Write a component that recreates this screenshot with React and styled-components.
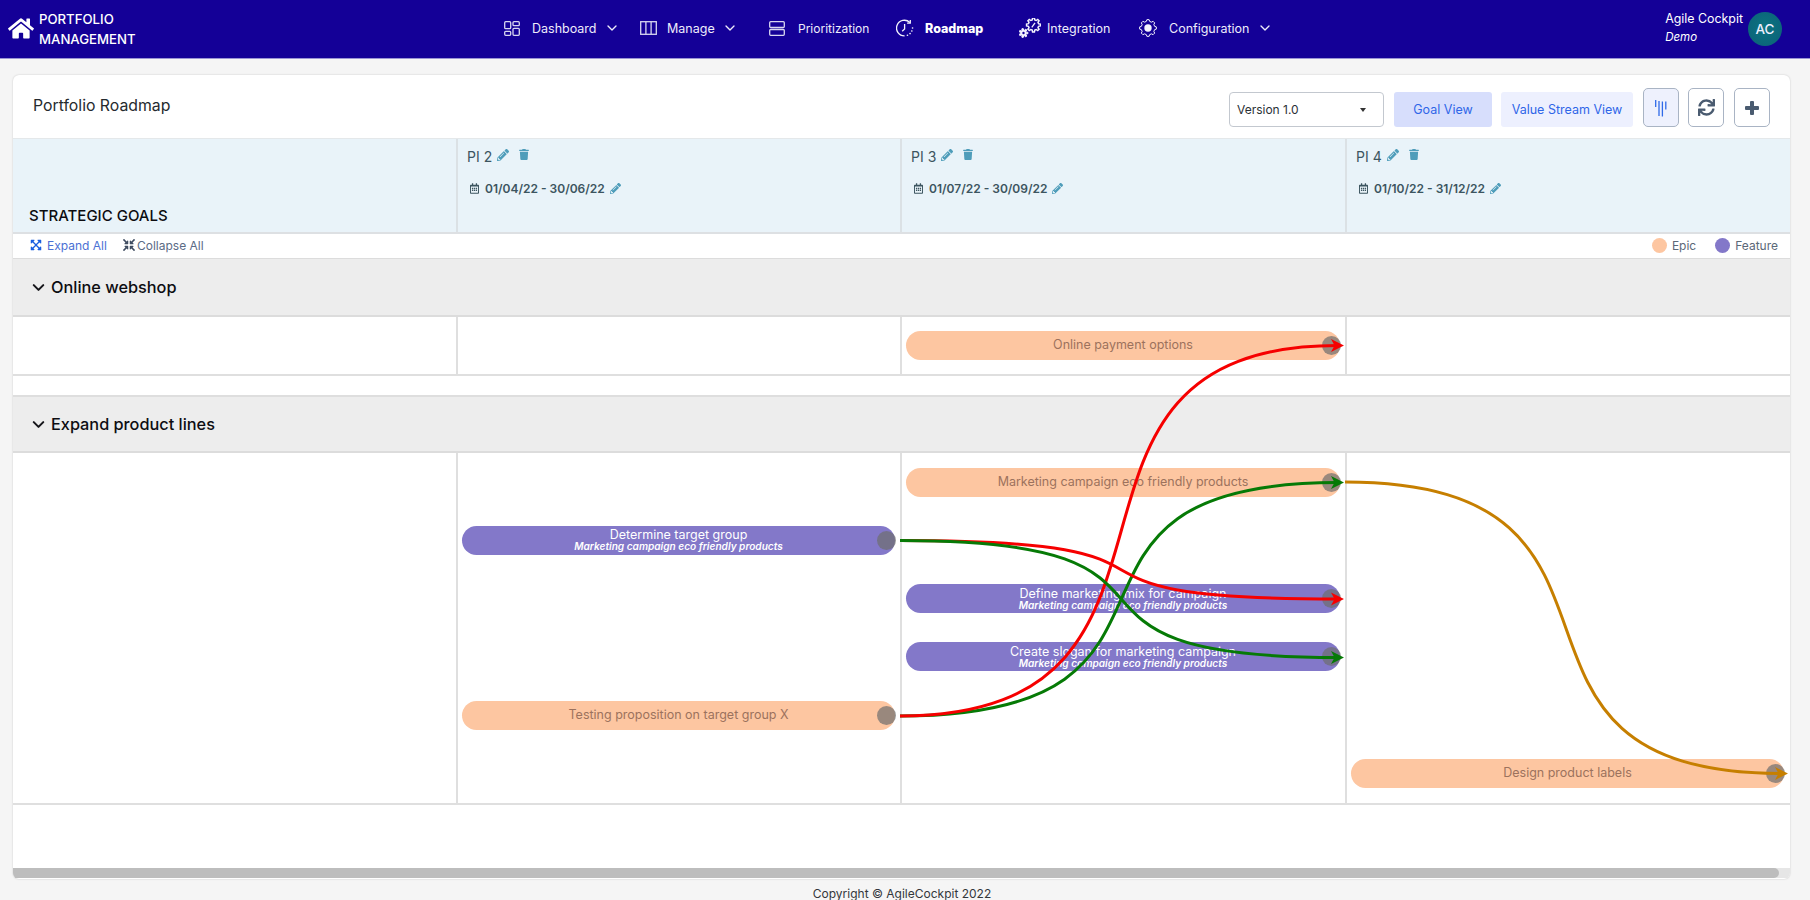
import React from "react";
import styled, { createGlobalStyle } from "styled-components";
import { ChevronDown } from "lucide-react";
import {
  FaHome, FaPencilAlt, FaTrash, FaRegCalendarAlt, FaSync,
  FaExpandArrowsAlt, FaCompressArrowsAlt,
} from "react-icons/fa";

const FONT = `Inter, "Noto Sans", "Liberation Sans", sans-serif`;

const Global = createGlobalStyle`
  html, body { margin: 0; padding: 0; height: 100%; overflow: hidden; }
  body { font-family: ${FONT}; background: #f5f5f5; }
  * { box-sizing: border-box; }
`;

const Page = styled.div`
  position: relative;
  width: 1810px;
  height: 900px;
  overflow: hidden;
  background: #f5f5f5;
  display: flex;
  flex-direction: column;
`;

const TopBar = styled.header`
  height: 59px;
  flex: none;
  background: #140097;
  border-bottom: 1px solid #9a94d4;
  display: flex;
  align-items: center;
  color: #f4f3fd;
`;

const Brand = styled.div`
  width: 504px;
  flex: none;
  padding-left: 8px;
  display: flex;
  align-items: center;
  gap: 5px;
  font-size: 13.2px;
  font-weight: 500;
  line-height: 20px;
  color: #fff;
  svg { width: 26px; height: 23px; flex: none; margin-top: -2px; }
`;

const Nav = styled.nav`
  display: flex;
  align-items: center;
  flex: none;
  margin-top: -2px;
`;

const NavItem = styled.div`
  width: ${(p) => p.$w}px;
  flex: none;
  display: flex;
  align-items: center;
  font-size: ${(p) => p.$size || 12.5}px;
  font-weight: ${(p) => (p.$active ? 800 : 400)};
  color: ${(p) => (p.$active ? "#fff" : "#eeecfb")};
`;

const NavIcon = styled.span`
  width: ${(p) => p.$w}px;
  flex: none;
  display: flex;
  align-items: center;
`;

const NavChevron = styled(ChevronDown)`
  width: 16px;
  height: 16px;
  margin-left: ${(p) => p.$ml}px;
  color: #eeecfb;
  flex: none;
`;

const User = styled.div`
  margin-left: auto;
  padding-right: 28px;
  display: flex;
  align-items: center;
  gap: 5px;
`;

const UserText = styled.div`
  font-size: 12.4px;
  line-height: 18px;
  color: #fff;
  margin-top: -3px;
`;

const UserRole = styled.div`
  font-size: 11.5px;
  font-style: italic;
  font-weight: 400;
`;

const Avatar = styled.div`
  width: 34px;
  height: 34px;
  border-radius: 50%;
  background: radial-gradient(circle at 50% 45%, #0c7480, #0b5f78);
  color: #eef;
  font-size: 13.5px;
  font-weight: 500;
  display: flex;
  align-items: center;
  justify-content: center;
`;

const Main = styled.main`
  flex: none;
  padding: 16px 20px 0 13px;
`;

const Card = styled.section`
  width: 1777px;
  height: 804px;
  background: #fff;
  border-radius: 6px;
  box-shadow: 0 0 2px rgba(0, 0, 0, 0.2);
  overflow: hidden;
  display: flex;
  flex-direction: column;
`;

const Toolbar = styled.div`
  height: 64px;
  flex: none;
  border-bottom: 1px solid #e4e8ea;
  display: flex;
  align-items: flex-start;
  padding: 13px 20px 0 20px;
`;

const Title = styled.h1`
  margin: 8px 0 0;
  font-size: 15.8px;
  font-weight: 400;
  color: #252a2e;
  flex: 1;
`;

const VersionSelect = styled.div`
  width: 155px;
  height: 35px;
  margin-top: 4px;
  border: 1px solid #c3c8cf;
  border-radius: 4px;
  display: flex;
  align-items: center;
  justify-content: space-between;
  padding: 0 17px 0 7px;
  font-size: 12px;
  color: #2a3036;
`;

const Caret = styled.span`
  width: 0;
  height: 0;
  border-left: 3px solid transparent;
  border-right: 3px solid transparent;
  border-top: 4px solid #333;
`;

const ViewButton = styled.div`
  width: ${(p) => p.$w}px;
  height: 35px;
  margin: 4px 0 0 ${(p) => p.$ml}px;
  background: ${(p) => (p.$on ? "#d7defc" : "#edf0fe")};
  border-radius: 3px;
  color: #2f66e8;
  font-size: 12.5px;
  display: flex;
  align-items: center;
  justify-content: center;
`;

const IconButton = styled.div`
  width: 36px;
  height: 39px;
  margin-left: ${(p) => p.$ml}px;
  background: ${(p) => (p.$on ? "#eef1fd" : "#fff")};
  border: 1.5px solid #a9b4c4;
  border-radius: 5px;
  color: #4a5b70;
  display: flex;
  align-items: center;
  justify-content: center;
`;

const Periods = styled.div`
  height: 95px;
  flex: none;
  display: grid;
  grid-template-columns: 445px 444px 445px 443px;
  background: #e9f3f9;
  border-bottom: 2px solid #dde0e3;
`;

const GoalsHead = styled.div`
  border-right: 2px solid #dbe1e5;
  padding: 0 0 5px 16px;
  display: flex;
  align-items: flex-end;
  font-size: 15px;
  font-weight: 500;
  line-height: 22px;
  color: #0c0c10;
`;

const Period = styled.div`
  border-right: ${(p) => (p.$last ? "none" : "2px solid #dbe1e5")};
  padding: 7px 0 0 9px;
  color: #3c5560;
`;

const PiLine = styled.div`
  display: flex;
  align-items: center;
  height: 20px;
  font-size: 14px;
  svg { color: #4f9dba; }
`;

const PiPencil = styled(FaPencilAlt)`
  width: 12px;
  height: 12px;
  margin: -3px 0 0 5px;
`;

const PiTrash = styled(FaTrash)`
  width: 10px;
  height: 11px;
  margin: -4px 0 0 10px;
`;

const DateLine = styled.div`
  display: flex;
  align-items: center;
  margin-top: 13px;
  height: 18px;
  font-size: 12px;
  font-weight: 600;
  color: #3c5560;
`;

const CalendarIcon = styled(FaRegCalendarAlt)`
  width: 9px;
  height: 11px;
  margin: 0 6px 0 3px;
`;

const DatePencil = styled(FaPencilAlt)`
  width: 11px;
  height: 11px;
  margin-left: 5px;
  color: #4f9dba;
`;

const ActionsRow = styled.div`
  height: 25px;
  flex: none;
  border-bottom: 1px solid #dcdcdc;
  display: flex;
  align-items: center;
  padding: 0 12px 2px 17px;
  font-size: 12px;
`;

const ActionLink = styled.span`
  display: flex;
  align-items: center;
  width: ${(p) => p.$w}px;
  color: ${(p) => p.$color};
  svg { color: ${(p) => p.$icon}; width: 12px; height: 12px; margin-right: ${(p) => p.$gap}px; flex: none; }
`;

const Legend = styled.div`
  margin-left: auto;
  display: flex;
  align-items: center;
  color: #5b6878;
`;

const LegendDot = styled.span`
  width: 15px;
  height: 15px;
  border-radius: 50%;
  background: ${(p) => p.$color};
  margin: 0 5px 0 ${(p) => p.$ml}px;
`;

const GroupHead = styled.div`
  height: 58px;
  flex: none;
  background: #ededed;
  border-bottom: 2px solid #dcdcdc;
  border-top: ${(p) => (p.$top ? "2px solid #dedede" : "none")};
  display: flex;
  align-items: center;
  padding-left: 16px;
  font-size: 16.3px;
  font-weight: 500;
  color: #0d0d12;
`;

const GroupChevron = styled(ChevronDown)`
  width: 19px;
  height: 19px;
  stroke-width: 2.6;
  margin-right: 3px;
  color: #15151a;
`;

const Lane = styled.div`
  height: ${(p) => p.$h}px;
  flex: none;
  display: grid;
  grid-template-columns: 445px 444px 445px 443px;
  border-bottom: 2px solid #dfdfdf;
`;

const LaneCol = styled.div`
  border-right: ${(p) => (p.$last ? "none" : "2px solid #dfdfdf")};
  padding: 0 ${(p) => (p.$last ? 6 : 5)}px 0 4px;
  display: grid;
  grid-template-rows: repeat(${(p) => p.$rows}, ${(p) => p.$slot}px);
`;

const Bar = styled.div`
  position: relative;
  grid-row: ${(p) => p.$row};
  align-self: center;
  height: 29px;
  border-radius: 15px;
  background: ${(p) => (p.$kind === "feature" ? "#8378c9" : "#fdc6a1")};
  color: ${(p) => (p.$kind === "feature" ? "#fff" : "#9c725d")};
  padding-bottom: ${(p) => (p.$kind === "feature" ? 0 : 2)}px;
  font-size: 12.5px;
  line-height: 13px;
  display: flex;
  flex-direction: column;
  align-items: center;
  justify-content: center;
  text-align: center;
`;

const BarSub = styled.div`
  font-size: 10.1px;
  font-style: italic;
  font-weight: 600;
  line-height: 11px;
`;

const Port = styled.span`
  position: absolute;
  right: -1px;
  top: 5px;
  width: 19px;
  height: 19px;
  border-radius: 50%;
  background: rgba(110, 110, 110, 0.7);
`;

const Spacer = styled.div`
  height: ${(p) => p.$h}px;
  flex: ${(p) => (p.$grow ? 1 : "none")};
`;

const Scrollbar = styled.div`
  height: 10px;
  flex: none;
  background: #e6e6e6;
  margin-bottom: 1px;
`;

const ScrollThumb = styled.div`
  width: 1766px;
  height: 100%;
  background: #bdbdbd;
  border-radius: 0 5px 5px 0;
`;

const Footer = styled.footer`
  flex: none;
  margin-top: 7px;
  text-align: center;
  padding-right: 6px;
  font-size: 12px;
  line-height: 16px;
  color: #33373b;
`;

const Overlay = styled.svg`
  position: absolute;
  left: 0;
  top: 0;
  pointer-events: none;
`;

const gearPath = (cx, cy, ro, ri, n) => {
  const pts = [];
  for (let i = 0; i < n; i++) {
    const s = (Math.PI * 2) / n;
    const a = i * s;
    [[-0.32, ri], [-0.17, ro], [0.17, ro], [0.32, ri]].forEach(([o, r]) => {
      const t = a + o * s;
      pts.push(`${(cx + r * Math.cos(t)).toFixed(2)} ${(cy + r * Math.sin(t)).toFixed(2)}`);
    });
  }
  return `M${pts.join("L")}Z`;
};

const lineProps = { fill: "none", stroke: "#d8d6f0", strokeWidth: 1.3 };
const whiteProps = { fill: "none", stroke: "#f4f3fd", strokeWidth: 1.3 };

const DashIcon = () => (
  <svg width="16" height="15" viewBox="0 0 16 15" {...lineProps}>
    <rect x=".7" y=".7" width="6" height="7" rx="1" />
    <rect x="9" y=".7" width="6.3" height="4" rx="1" />
    <rect x=".7" y="10.3" width="6" height="4" rx="1" />
    <rect x="9" y="7.3" width="6.3" height="7" rx="1" />
  </svg>
);
const ManageIcon = () => (
  <svg width="17" height="14" viewBox="0 0 17 14" {...lineProps}>
    <rect x=".7" y=".7" width="15.6" height="12.6" />
    <path d="M5.9.7v12.6M11.1.7v12.6" />
  </svg>
);
const PrioIcon = () => (
  <svg width="16" height="15" viewBox="0 0 16 15" {...lineProps}>
    <rect x=".7" y=".7" width="14.6" height="5.8" rx="1" />
    <rect x=".7" y="8.5" width="14.6" height="5.8" rx="1" />
  </svg>
);
const RoadIcon = () => (
  <svg width="18" height="18" viewBox="0 0 18 18" {...whiteProps}>
    <path d="M13.8 3.5A7.8 7.8 0 1 0 8.6 16.9" />
    <path d="M14.3.9v3.2h-3.2" />
    <path d="M8.6 5v5l-2.4 2.2" />
    <path d="M11.4 16.3l.1 0M14 14.6l.1 0M15.8 12l.1 0M16.5 9l.1 0" strokeWidth="1.6" strokeLinecap="round" />
  </svg>
);
const IntegrationIcon = () => (
  <svg width="22" height="20" viewBox="0 0 22 20" {...whiteProps}>
    <path d={gearPath(14.5, 7, 7, 5.2, 8)} strokeWidth="1.5" />
    <path d="M12.8 9.4l3.2-4.6" />
    <path d={gearPath(4.5, 15, 4.5, 3, 7)} strokeWidth="1" fill="#f4f3fd" />
    <circle cx="4.5" cy="15" r="1.2" fill="#140097" stroke="none" />
  </svg>
);
const ConfigIcon = () => (
  <svg width="18" height="18" viewBox="0 0 18 18" {...whiteProps}>
    <path d={gearPath(9, 9, 8.4, 6.8, 8)} strokeWidth="1" />
    <circle cx="9" cy="9" r="3.7" fill="#f4f3fd" stroke="none" />
  </svg>
);
const BarsIcon = () => (
  <svg width="14" height="18" viewBox="0 0 14 18" fill="none" stroke="#2f6ae8" strokeWidth="1.3">
    <path d="M1.7 1v7M5 2v15M8.4 2.5v15M11.8 2.5v8" />
  </svg>
);
const PlusIcon = () => (
  <svg width="14" height="14" viewBox="0 0 14 14" fill="#4a5b70">
    <rect x="5" y="0" width="4" height="14" rx="1" />
    <rect x="0" y="5" width="14" height="4" rx="1" />
  </svg>
);

const Curve = ({ from, to, color, a = 0.76 }) => {
  const [x0, y0] = from;
  const [x3, y3] = to;
  const w = x3 - x0;
  return (
    <g>
      <path
        d={`M${x0} ${y0}C${x0 + a * w} ${y0} ${x3 - a * w} ${y3} ${x3 - 6} ${y3}`}
        fill="none"
        stroke={color}
        strokeWidth="3"
      />
      <path d={`M${x3} ${y3}l-13 -6.5l3.5 6.5l-3.5 6.5z`} fill={color} />
    </g>
  );
};

const periods = [
  { name: "PI 2", range: "01/04/22 - 30/06/22" },
  { name: "PI 3", range: "01/07/22 - 30/09/22" },
  { name: "PI 4", range: "01/10/22 - 31/12/22", last: true },
];

const SUB = "Marketing campaign eco friendly products";

const RoadmapBar = ({ kind, row, title, sub }) => (
  <Bar $kind={kind} $row={row}>
    <div>{title}</div>
    {sub && <BarSub>{sub}</BarSub>}
    <Port />
  </Bar>
);

export default function App() {
  return (
    <Page>
      <Global />
      <TopBar>
        <Brand>
          <FaHome />
          <div>PORTFOLIO<br />MANAGEMENT</div>
        </Brand>
        <Nav>
          <NavItem $w={136}><NavIcon $w={28}><DashIcon /></NavIcon>Dashboard<NavChevron $ml={8} /></NavItem>
          <NavItem $w={129}><NavIcon $w={27}><ManageIcon /></NavIcon>Manage<NavChevron $ml={7} /></NavItem>
          <NavItem $w={127} $size={12}><NavIcon $w={29}><PrioIcon /></NavIcon>Prioritization</NavItem>
          <NavItem $w={123} $active><NavIcon $w={29}><RoadIcon /></NavIcon>Roadmap</NavItem>
          <NavItem $w={120}><NavIcon $w={28}><IntegrationIcon /></NavIcon>Integration</NavItem>
          <NavItem $w={131}><NavIcon $w={30}><ConfigIcon /></NavIcon>Configuration<NavChevron $ml={8} /></NavItem>
        </Nav>
        <User>
          <UserText>
            <div>Agile Cockpit</div>
            <UserRole>Demo</UserRole>
          </UserText>
          <Avatar>AC</Avatar>
        </User>
      </TopBar>
      <Main>
        <Card>
          <Toolbar>
            <Title>Portfolio Roadmap</Title>
            <VersionSelect>Version 1.0<Caret /></VersionSelect>
            <ViewButton $w={98} $ml={10} $on>Goal View</ViewButton>
            <ViewButton $w={132} $ml={9}>Value Stream View</ViewButton>
            <IconButton $ml={10} $on><BarsIcon /></IconButton>
            <IconButton $ml={9}><FaSync size={17} /></IconButton>
            <IconButton $ml={10}><PlusIcon /></IconButton>
          </Toolbar>
          <Periods>
            <GoalsHead>STRATEGIC GOALS</GoalsHead>
            {periods.map((p) => (
              <Period key={p.name} $last={p.last}>
                <PiLine>{p.name}<PiPencil /><PiTrash /></PiLine>
                <DateLine><CalendarIcon />{p.range}<DatePencil /></DateLine>
              </Period>
            ))}
          </Periods>
          <ActionsRow>
            <ActionLink $w={93} $color="#4a70d4" $icon="#1a5fe0" $gap={5}><FaExpandArrowsAlt />Expand All</ActionLink>
            <ActionLink $color="#5b6b85" $icon="#3f4c60" $gap={2}><FaCompressArrowsAlt />Collapse All</ActionLink>
            <Legend>
              <LegendDot $color="#fdc6a1" $ml={0} />Epic
              <LegendDot $color="#8378c9" $ml={19} />Feature
            </Legend>
          </ActionsRow>
          <GroupHead><GroupChevron />Online webshop</GroupHead>
          <Lane $h={59}>
            <LaneCol $rows={1} $slot={56} />
            <LaneCol $rows={1} $slot={56} />
            <LaneCol $rows={1} $slot={56}>
              <RoadmapBar kind="epic" row={1} title="Online payment options" />
            </LaneCol>
            <LaneCol $rows={1} $slot={56} $last />
          </Lane>
          <Spacer $h={19} />
          <GroupHead $top><GroupChevron />Expand product lines</GroupHead>
          <Lane $h={352}>
            <LaneCol $rows={6} $slot={58.25} />
            <LaneCol $rows={6} $slot={58.25}>
              <RoadmapBar kind="feature" row={2} title="Determine target group" sub={SUB} />
              <RoadmapBar kind="epic" row={5} title="Testing proposition on target group X" />
            </LaneCol>
            <LaneCol $rows={6} $slot={58.25}>
              <RoadmapBar kind="epic" row={1} title="Marketing campaign eco friendly products" />
              <RoadmapBar kind="feature" row={3} title="Define marketing mix for campaign" sub={SUB} />
              <RoadmapBar kind="feature" row={4} title="Create slogan for marketing campaign" sub={SUB} />
            </LaneCol>
            <LaneCol $rows={6} $slot={58.25} $last>
              <RoadmapBar kind="epic" row={6} title="Design product labels" />
            </LaneCol>
          </Lane>
          <Spacer $grow />
          <Scrollbar><ScrollThumb /></Scrollbar>
        </Card>
      </Main>
      <Footer>Copyright © AgileCockpit 2022</Footer>
      <Overlay width="1810" height="900" viewBox="0 0 1810 900">
        <Curve from={[1345, 482]} to={[1788, 773.5]} color="#c67f00" />
        <Curve from={[900, 716]} to={[1344, 482.5]} color="#067a06" />
        <Curve from={[900, 716]} to={[1344, 345.5]} color="#f60000" />
        <Curve from={[900, 540.5]} to={[1344, 599]} color="#f60000" />
        <Curve from={[900, 540.5]} to={[1344, 657.5]} color="#067a06" />
      </Overlay>
    </Page>
  );
}
